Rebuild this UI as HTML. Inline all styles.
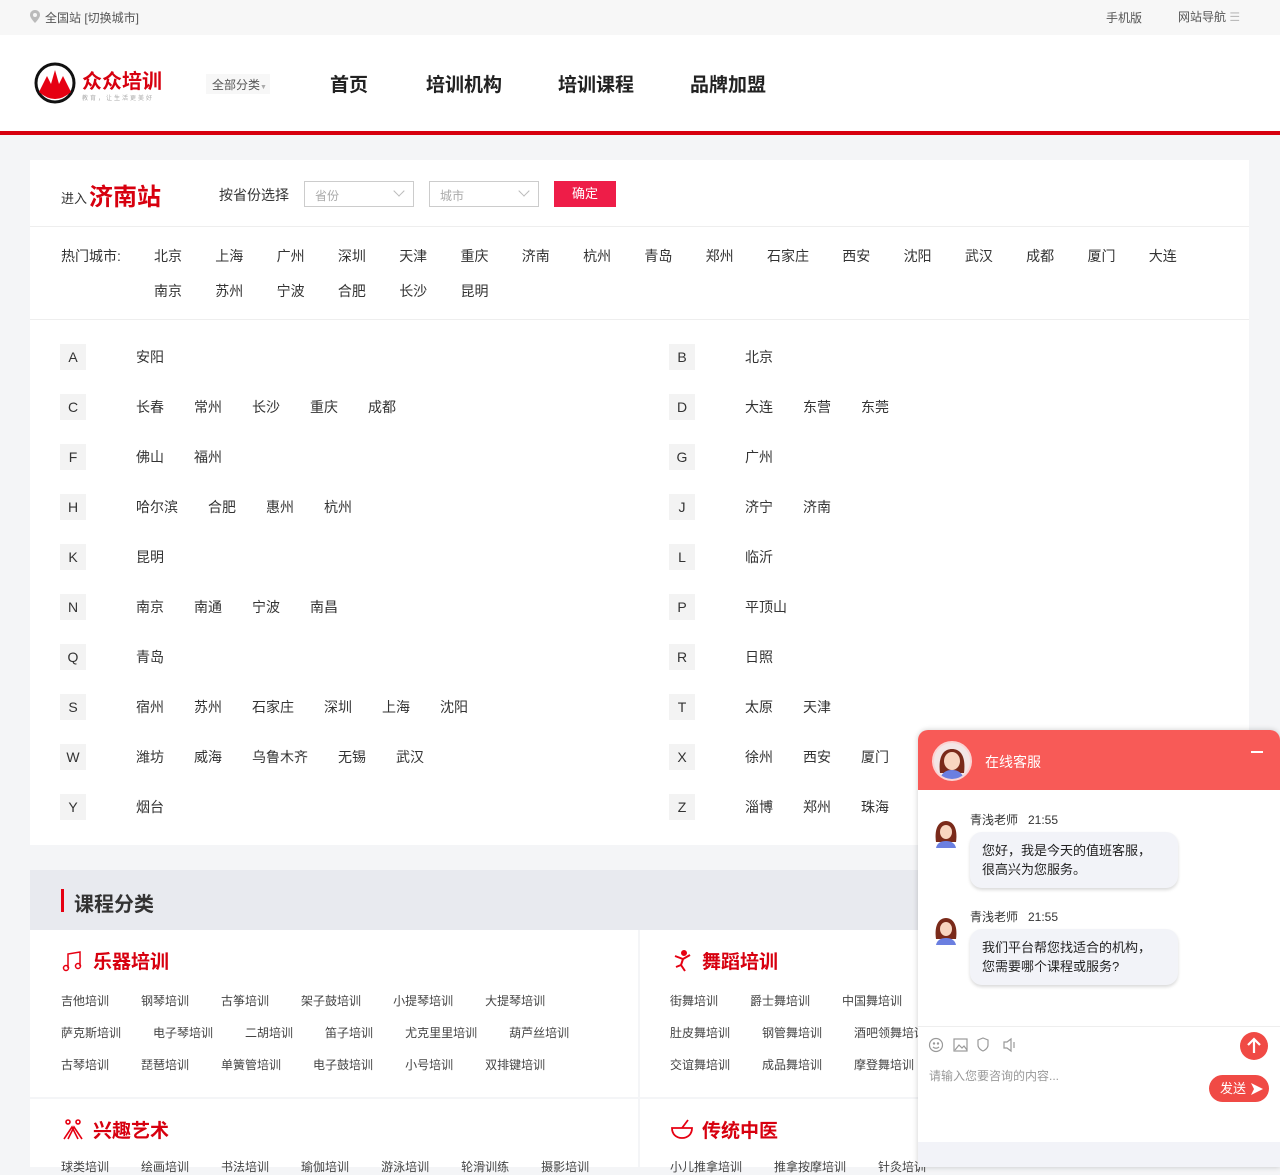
<!DOCTYPE html>
<html><head><meta charset="utf-8"><style>
*{margin:0;padding:0;box-sizing:border-box}
body{width:1280px;height:1167px;overflow:hidden;background:#f4f5f7;font-family:"Liberation Sans","Noto Sans CJK SC",sans-serif;color:#333;position:relative}
.a{position:absolute;white-space:nowrap}
.top{position:absolute;left:0;top:0;width:1280px;height:35px;background:#f7f7f7;font-size:12px;color:#555}
.hdr{position:absolute;left:0;top:35px;width:1280px;height:96px;background:#fff}
.red{position:absolute;left:0;top:131px;width:1280px;height:4px;background:#d7000f}
.card{position:absolute;left:30px;top:160px;width:1219px;height:685px;background:#fff}
.nav{font-size:19px;font-weight:bold;color:#222}
.sel{position:absolute;top:181px;width:110px;height:26px;border:1px solid #ccc;font-size:12px;color:#aaa;padding:5px 10px}
.sel:after{content:"";position:absolute;right:10px;top:5px;width:7px;height:7px;border-right:1px solid #bbb;border-bottom:1px solid #bbb;transform:rotate(45deg)}
.hot span{margin-right:33.3px;font-size:14px}
.row{position:absolute;height:26px}
.lt{position:absolute;left:0;top:0;width:26px;height:26px;background:#f3f3f3;font-size:14px;text-align:center;line-height:26px;color:#333}
.ct{position:absolute;left:76px;top:0;line-height:26px;font-size:14px;white-space:nowrap}
.ct span{margin-right:30px}
.sec{position:absolute;left:30px;top:870px;width:1219px;height:60px;background:#e8eaef}
.blk{position:absolute;background:#fff}
.bt{position:absolute;font-size:19px;font-weight:bold;color:#d7000f;white-space:nowrap}
.it{position:absolute;font-size:12px;color:#444;white-space:nowrap}
.it span{margin-right:32px}
.chat{position:absolute;left:918px;top:730px;width:362px;height:437px;background:#fff;border-radius:10px 10px 0 0;box-shadow:0 0 6px rgba(0,0,0,.2);overflow:hidden}
.bub{position:absolute;left:52px;width:208px;background:#f2f3f8;border-radius:12px;box-shadow:0 2px 3px rgba(0,0,0,.15);font-size:13px;line-height:19px;padding:9px 12px;color:#222}
.av{position:absolute;width:26px;height:30px}
</style></head><body>
<div class="top">
<svg class="a" style="left:30px;top:10px" width="10" height="13" viewBox="0 0 10 13"><path d="M5 0C2 0 0 2.2 0 5c0 3 5 8 5 8s5-5 5-8C10 2.2 8 0 5 0z" fill="#bbb"/><circle cx="5" cy="5" r="2" fill="#f7f7f7"/></svg>
<div class="a" style="left:45px;top:9px">全国站 [切换城市]</div>
<div class="a" style="left:1106px;top:9px">手机版</div>
<div class="a" style="left:1178px;top:8px">网站导航 <span style="color:#bbb">☰</span></div>
</div>
<div class="hdr"></div>
<svg class="a" style="left:34px;top:62px" width="42" height="42" viewBox="0 0 42 42"><circle cx="21" cy="21" r="19" fill="#fff" stroke="#111" stroke-width="3"/><path d="M5 30 L13 14 L17 22 L21 8 L25 22 L29 14 L37 30 Q21 44 5 30z" fill="#e60012"/></svg>
<div class="a" style="left:82px;top:65px;font-size:20px;font-weight:bold;color:#d7000f">众众培训</div>
<div class="a" style="left:82px;top:93px;font-size:6px;color:#aaa;letter-spacing:2px">教育，让生活更美好</div>
<div class="a" style="left:206px;top:74px;width:64px;height:20px;background:#f7f7f7;font-size:12px;color:#555;padding:2px 6px">全部分类<span style="font-size:7px;color:#aaa">▼</span></div>
<div class="a nav" style="left:330px;top:70px">首页</div>
<div class="a nav" style="left:426px;top:70px">培训机构</div>
<div class="a nav" style="left:558px;top:70px">培训课程</div>
<div class="a nav" style="left:690px;top:70px">品牌加盟</div>
<div class="red"></div>

<div class="card">
<div style="position:absolute;left:0;top:66px;width:1219px;height:1px;background:#eee"></div>
<div style="position:absolute;left:0;top:159px;width:1219px;height:1px;background:#eee"></div>
</div>
<div class="a" style="left:61px;top:188px;font-size:13px">进入</div>
<div class="a" style="left:89px;top:177px;font-size:24px;font-weight:bold;color:#d7000f">济南站</div>
<div class="a" style="left:219px;top:185px;font-size:14px">按省份选择</div>
<div class="sel" style="left:304px">省份</div>
<div class="sel" style="left:429px">城市</div>
<div class="a" style="left:554px;top:181px;width:62px;height:26px;background:#ee1d48;color:#fff;font-size:13px;text-align:center;line-height:26px">确定</div>
<div class="a" style="left:61px;top:246px;font-size:14px">热门城市:</div>
<div class="a hot" style="left:154px;top:246px"><span>北京</span><span>上海</span><span>广州</span><span>深圳</span><span>天津</span><span>重庆</span><span>济南</span><span>杭州</span><span>青岛</span><span>郑州</span><span>石家庄</span><span>西安</span><span>沈阳</span><span>武汉</span><span>成都</span><span>厦门</span><span>大连</span></div>
<div class="a hot" style="left:154px;top:281px"><span>南京</span><span>苏州</span><span>宁波</span><span>合肥</span><span>长沙</span><span>昆明</span></div>

<div class="row" style="left:60px;top:344px"><div class="lt">A</div><div class="ct"><span>安阳</span></div></div>
<div class="row" style="left:669px;top:344px"><div class="lt">B</div><div class="ct"><span>北京</span></div></div>
<div class="row" style="left:60px;top:394px"><div class="lt">C</div><div class="ct"><span>长春</span><span>常州</span><span>长沙</span><span>重庆</span><span>成都</span></div></div>
<div class="row" style="left:669px;top:394px"><div class="lt">D</div><div class="ct"><span>大连</span><span>东营</span><span>东莞</span></div></div>
<div class="row" style="left:60px;top:444px"><div class="lt">F</div><div class="ct"><span>佛山</span><span>福州</span></div></div>
<div class="row" style="left:669px;top:444px"><div class="lt">G</div><div class="ct"><span>广州</span></div></div>
<div class="row" style="left:60px;top:494px"><div class="lt">H</div><div class="ct"><span>哈尔滨</span><span>合肥</span><span>惠州</span><span>杭州</span></div></div>
<div class="row" style="left:669px;top:494px"><div class="lt">J</div><div class="ct"><span>济宁</span><span>济南</span></div></div>
<div class="row" style="left:60px;top:544px"><div class="lt">K</div><div class="ct"><span>昆明</span></div></div>
<div class="row" style="left:669px;top:544px"><div class="lt">L</div><div class="ct"><span>临沂</span></div></div>
<div class="row" style="left:60px;top:594px"><div class="lt">N</div><div class="ct"><span>南京</span><span>南通</span><span>宁波</span><span>南昌</span></div></div>
<div class="row" style="left:669px;top:594px"><div class="lt">P</div><div class="ct"><span>平顶山</span></div></div>
<div class="row" style="left:60px;top:644px"><div class="lt">Q</div><div class="ct"><span>青岛</span></div></div>
<div class="row" style="left:669px;top:644px"><div class="lt">R</div><div class="ct"><span>日照</span></div></div>
<div class="row" style="left:60px;top:694px"><div class="lt">S</div><div class="ct"><span>宿州</span><span>苏州</span><span>石家庄</span><span>深圳</span><span>上海</span><span>沈阳</span></div></div>
<div class="row" style="left:669px;top:694px"><div class="lt">T</div><div class="ct"><span>太原</span><span>天津</span></div></div>
<div class="row" style="left:60px;top:744px"><div class="lt">W</div><div class="ct"><span>潍坊</span><span>威海</span><span>乌鲁木齐</span><span>无锡</span><span>武汉</span></div></div>
<div class="row" style="left:669px;top:744px"><div class="lt">X</div><div class="ct"><span>徐州</span><span>西安</span><span>厦门</span></div></div>
<div class="row" style="left:60px;top:794px"><div class="lt">Y</div><div class="ct"><span>烟台</span></div></div>
<div class="row" style="left:669px;top:794px"><div class="lt">Z</div><div class="ct"><span>淄博</span><span>郑州</span><span>珠海</span></div></div>

<div class="sec"></div>
<div class="a" style="left:61px;top:889px;width:3px;height:23px;background:#e60012"></div>
<div class="a" style="left:74px;top:888px;font-size:20px;font-weight:bold;color:#333">课程分类</div>
<div class="blk" style="left:30px;top:930px;width:608px;height:167px"></div>
<div class="blk" style="left:640px;top:930px;width:609px;height:167px"></div>
<div class="blk" style="left:30px;top:1099px;width:608px;height:68px"></div>
<div class="blk" style="left:640px;top:1099px;width:609px;height:68px"></div>

<svg class="a" style="left:62px;top:950px" width="22" height="22" viewBox="0 0 22 22" fill="none" stroke="#e60012" stroke-width="1.5"><path d="M6 18V4l12-2v14"/><circle cx="4" cy="18" r="2.5"/><circle cx="16" cy="16" r="2.5"/></svg>
<div class="bt" style="left:93px;top:947px">乐器培训</div>
<div class="it" style="left:61px;top:992px"><span>吉他培训</span><span>钢琴培训</span><span>古筝培训</span><span>架子鼓培训</span><span>小提琴培训</span><span>大提琴培训</span></div>
<div class="it" style="left:61px;top:1024px"><span>萨克斯培训</span><span>电子琴培训</span><span>二胡培训</span><span>笛子培训</span><span>尤克里里培训</span><span>葫芦丝培训</span></div>
<div class="it" style="left:61px;top:1056px"><span>古琴培训</span><span>琵琶培训</span><span>单簧管培训</span><span>电子鼓培训</span><span>小号培训</span><span>双排键培训</span></div>

<svg class="a" style="left:672px;top:950px" width="20" height="22" viewBox="0 0 20 22" fill="none" stroke="#e60012" stroke-width="2"><circle cx="12" cy="3" r="2" fill="#e60012"/><path d="M3 6l8 3 7-4M11 9l-2 6 4 6M9 15l-5 2"/></svg>
<div class="bt" style="left:702px;top:947px">舞蹈培训</div>
<div class="it" style="left:670px;top:992px"><span>街舞培训</span><span>爵士舞培训</span><span>中国舞培训</span></div>
<div class="it" style="left:670px;top:1024px"><span>肚皮舞培训</span><span>钢管舞培训</span><span>酒吧领舞培训</span></div>
<div class="it" style="left:670px;top:1056px"><span>交谊舞培训</span><span>成品舞培训</span><span>摩登舞培训</span></div>

<svg class="a" style="left:62px;top:1119px" width="22" height="22" viewBox="0 0 22 22" fill="none" stroke="#e60012" stroke-width="1.6"><circle cx="6" cy="3" r="2"/><circle cx="16" cy="3" r="2"/><path d="M2 20l8-12 6 12M20 20L12 8 6 20"/></svg>
<div class="bt" style="left:93px;top:1116px">兴趣艺术</div>
<div class="it" style="left:61px;top:1158px"><span>球类培训</span><span>绘画培训</span><span>书法培训</span><span>瑜伽培训</span><span>游泳培训</span><span>轮滑训练</span><span>摄影培训</span></div>
<svg class="a" style="left:670px;top:1118px" width="24" height="24" viewBox="0 0 24 24" fill="none" stroke="#e60012" stroke-width="1.8"><path d="M2 10h20c0 6-4 10-10 10S2 16 2 10z"/><path d="M12 10l6-8"/></svg>
<div class="bt" style="left:702px;top:1116px">传统中医</div>
<div class="it" style="left:670px;top:1158px"><span>小儿推拿培训</span><span>推拿按摩培训</span><span>针灸培训</span></div>

<div class="chat">
<div style="position:absolute;left:0;top:0;width:362px;height:60px;background:#f85a57"></div>
<div style="position:absolute;left:14px;top:11px;width:40px;height:40px;border-radius:50%;background:#f3e6e6;border:2px solid #fbd3d3;overflow:hidden">
<svg width="36" height="36" viewBox="0 0 36 36"><path d="M6 30C4 14 9 6 18 6s14 8 12 24z" fill="#7a2a1a"/><ellipse cx="18" cy="18" rx="8" ry="9" fill="#f8d5c0"/><path d="M6 36c2-7 7-9 12-9s10 2 12 9z" fill="#6b7fe0"/></svg></div>
<div class="a" style="left:67px;top:22px;color:#fff;font-size:14px">在线客服</div>
<div class="a" style="left:333px;top:21px;width:12px;height:2px;background:#fff"></div>
<svg class="av" style="left:15px;top:88px" viewBox="0 0 26 30"><path d="M3 24C1 10 6 3 13 3s12 7 10 21z" fill="#7a2a1a"/><ellipse cx="13" cy="14" rx="6" ry="7" fill="#f8d5c0"/><path d="M3 30c1-5 5-7 10-7s9 2 10 7z" fill="#6b7fe0"/></svg>
<div class="a" style="left:52px;top:81px;font-size:12px;color:#333">青浅老师 &nbsp; 21:55</div>
<div class="bub" style="top:102px">您好，我是今天的值班客服，<br>很高兴为您服务。</div>
<svg class="av" style="left:15px;top:185px" viewBox="0 0 26 30"><path d="M3 24C1 10 6 3 13 3s12 7 10 21z" fill="#7a2a1a"/><ellipse cx="13" cy="14" rx="6" ry="7" fill="#f8d5c0"/><path d="M3 30c1-5 5-7 10-7s9 2 10 7z" fill="#6b7fe0"/></svg>
<div class="a" style="left:52px;top:178px;font-size:12px;color:#333">青浅老师 &nbsp; 21:55</div>
<div class="bub" style="top:199px">我们平台帮您找适合的机构，<br>您需要哪个课程或服务?</div>
<div style="position:absolute;left:0;top:296px;width:362px;height:1px;background:#eee"></div>
<svg class="a" style="left:10px;top:306px" width="100" height="18" viewBox="0 0 100 18" fill="none" stroke="#999" stroke-width="1.2"><circle cx="8" cy="9" r="6.5"/><circle cx="6" cy="7.5" r=".6" fill="#999"/><circle cx="10" cy="7.5" r=".6" fill="#999"/><path d="M5 11q3 2.5 6 0"/><rect x="26" y="3" width="13" height="12"/><path d="M27 14l4-5 3 3 2-2 3 4"/><path d="M50 4l5-2 5 2v5c0 4-5 6-5 6s-5-2-5-6z"/><path d="M76 6h3l4-3v12l-4-3h-3z"/><path d="M86 6v6"/></svg>
<div class="a" style="left:322px;top:302px;width:28px;height:28px;border-radius:50%;background:#f04a45"><svg width="28" height="28" viewBox="0 0 28 28" fill="none" stroke="#fff" stroke-width="2.2"><path d="M14 21V7M8 13l6-6 6 6"/></svg></div>
<div class="a" style="left:11px;top:337px;font-size:12px;color:#999">请输入您要咨询的内容...</div>
<div class="a" style="left:291px;top:345px;width:60px;height:27px;border-radius:14px;background:#f04a45;color:#fff;font-size:13px;line-height:27px;padding-left:11px">发送 <svg style="vertical-align:-3px" width="14" height="14" viewBox="0 0 14 14"><path d="M1 1l12 6-12 6 3-6z" fill="#fff"/></svg></div>
<div style="position:absolute;left:0;top:412px;width:362px;height:25px;background:#f2f3f8"></div>
</div>
</body></html>
